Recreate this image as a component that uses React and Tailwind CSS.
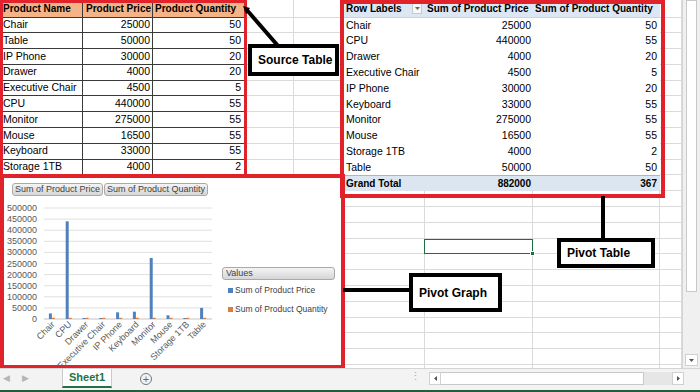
import React from "react";

const srcRows = [
  ["Chair", 25000, 50],
  ["Table", 50000, 50],
  ["IP Phone", 30000, 20],
  ["Drawer", 4000, 20],
  ["Executive Chair", 4500, 5],
  ["CPU", 440000, 55],
  ["Monitor", 275000, 55],
  ["Mouse", 16500, 55],
  ["Keyboard", 33000, 55],
  ["Storage 1TB", 4000, 2],
];

const pivotRows = [
  ["Chair", 25000, 50],
  ["CPU", 440000, 55],
  ["Drawer", 4000, 20],
  ["Executive Chair", 4500, 5],
  ["IP Phone", 30000, 20],
  ["Keyboard", 33000, 55],
  ["Monitor", 275000, 55],
  ["Mouse", 16500, 55],
  ["Storage 1TB", 4000, 2],
  ["Table", 50000, 50],
];

function SourceTable() {
  const cell = "border-r border-b border-[#3a3a3a] flex items-center whitespace-nowrap overflow-hidden";
  return (
    <div className="col-start-1 col-end-4 row-start-1 row-end-12 grid grid-cols-[83px_70px_92px] grid-rows-[17.5px_repeat(10,15.8px)] bg-white text-[10.5px] text-black">
      <div className={`${cell} bg-[#f5b487] pl-[3px] font-bold text-[10px]`}>Product Name</div>
      <div className={`${cell} bg-[#f5b487] pl-[3px] font-bold text-[10px]`}>Product Price</div>
      <div className={`${cell} bg-[#f5b487] pl-[2px] font-bold text-[10px]`}>Product Quantity</div>
      {srcRows.map((r) => (
        <React.Fragment key={r[0]}>
          <div className={`${cell} pl-[3px]`}>{r[0]}</div>
          <div className={`${cell} justify-end pr-[2px]`}>{r[1]}</div>
          <div className={`${cell} justify-end pr-[3px]`}>{r[2]}</div>
        </React.Fragment>
      ))}
    </div>
  );
}

function PivotTable() {
  const cell = "flex items-center whitespace-nowrap overflow-hidden";
  return (
    <div className="col-start-6 col-end-9 row-start-1 row-end-13 grid grid-cols-[82px_108px_127px] grid-rows-[17.5px_repeat(11,15.8px)] bg-white text-[10.5px] text-black">
      <div className={`${cell} bg-[#dde7f3] border-b border-[#c3d4ea] pl-[3px] font-bold text-[10px] justify-between pr-[3px]`}>
        <span>Row Labels</span>
        <span className="w-[10px] h-[11px] border border-[#c9c9c9] bg-[#f7f7f7] flex items-center justify-center">
          <svg width="5" height="3" viewBox="0 0 5 3"><path d="M0 0H5L2.5 3Z" fill="#666" /></svg>
        </span>
      </div>
      <div className={`${cell} bg-[#dde7f3] border-b border-[#c3d4ea] pl-[2px] font-bold text-[10px]`}>Sum of Product Price</div>
      <div className={`${cell} bg-[#dde7f3] border-b border-[#c3d4ea] pl-[2px] font-bold text-[10px]`}>Sum of Product Quantity</div>
      {pivotRows.map((r) => (
        <React.Fragment key={r[0]}>
          <div className={`${cell} pl-[3px]`}>{r[0]}</div>
          <div className={`${cell} justify-end pr-[2px]`}>{r[1]}</div>
          <div className={`${cell} justify-end pr-[3px]`}>{r[2]}</div>
        </React.Fragment>
      ))}
      <div className={`${cell} bg-[#dce6f1] border-t border-[#9db8dc] pl-[3px] font-bold text-[10px]`}>Grand Total</div>
      <div className={`${cell} bg-[#dce6f1] border-t border-[#9db8dc] justify-end pr-[2px] font-bold text-[10px]`}>882000</div>
      <div className={`${cell} bg-[#dce6f1] border-t border-[#9db8dc] justify-end pr-[3px] font-bold text-[10px]`}>367</div>
    </div>
  );
}

function FieldButton({ children }) {
  return (
    <div className="h-[13px] px-[2px] flex items-center rounded-[3px] border border-[#a9a9a9] bg-gradient-to-b from-[#f4f4f4] to-[#d6d6d6] text-[9px] text-[#3f3f3f] whitespace-nowrap leading-none">
      {children}
    </div>
  );
}

function Chart() {
  const cats = ["Chair", "CPU", "Drawer", "Executive Chair", "IP Phone", "Keyboard", "Monitor", "Mouse", "Storage 1TB", "Table"];
  const price = [25000, 440000, 4000, 4500, 30000, 33000, 275000, 16500, 4000, 50000];
  const y0 = 121;
  const k = 111 / 500000;
  const ticks = [0, 50000, 100000, 150000, 200000, 250000, 300000, 350000, 400000, 450000, 500000];
  const x0 = 40;
  const cw = 16.8;
  return (
    <div className="col-start-1 col-end-6 row-start-12 row-end-24 -mt-[1.5px] -mr-[2px] -mb-[4px] border-4 border-[#e2222a] bg-white flex z-10 overflow-hidden">
      <div className="flex flex-col w-[216px] shrink-0">
        <div className="flex pt-[5px] pl-[8px] gap-[1px] h-[20px]">
          <FieldButton>Sum of Product Price</FieldButton>
          <FieldButton>Sum of Product Quantity</FieldButton>
        </div>
        <svg width="216" height="167" className="block">
          {ticks.map((t) => (
            <g key={t}>
              <line x1={x0} x2={x0 + cw * 10} y1={y0 - t * k} y2={y0 - t * k} stroke={t === 0 ? "#c4c4c4" : "#e0e0e0"} strokeWidth="1" />
              <text x="33" y={y0 - t * k + 3} textAnchor="end" fontSize="9" fill="#595959" fontFamily="Liberation Sans, Arial, sans-serif">{t}</text>
            </g>
          ))}
          {cats.map((c, i) => {
            const cx = x0 + cw * (i + 0.5);
            const h = Math.max(price[i] * k, 1);
            return (
              <g key={c}>
                <rect x={cx - 3.5} y={y0 - h} width="3" height={h} fill="#4f81bd" />
                <rect x={cx - 0.5} y={y0 - 1.2} width="3" height="1.2" fill="#e07b39" />
                <text x={cx + 3} y={y0 + 6} textAnchor="end" fontSize="9" fill="#595959" fontFamily="Liberation Sans, Arial, sans-serif" transform={`rotate(-45 ${cx + 3} ${y0 + 6})`}>{c}</text>
              </g>
            );
          })}
        </svg>
      </div>
      <div className="pt-[89px] pl-[2px] flex flex-col">
        <div className="w-[113px] h-[13px] pl-[3px] flex items-center rounded-[3px] border border-[#a9a9a9] bg-gradient-to-b from-[#f4f4f4] to-[#d6d6d6] text-[9px] text-[#3f3f3f] leading-none">Values</div>
        <div className="flex items-center gap-[2px] pl-[6px] mt-[6px] text-[8.5px] text-[#404040] leading-none">
          <span className="w-[5px] h-[5px] bg-[#4f81bd]" />
          <span>Sum of Product Price</span>
        </div>
        <div className="flex items-center gap-[2px] pl-[6px] mt-[11px] text-[8.5px] text-[#404040] leading-none">
          <span className="w-[5px] h-[5px] bg-[#e07b39]" />
          <span>Sum of Product Quantity</span>
        </div>
      </div>
    </div>
  );
}

function Callout({ className, children }) {
  return (
    <div className={`absolute z-30 border-4 border-black bg-white flex items-center font-bold text-[12px] text-black whitespace-nowrap ${className}`}>
      {children}
    </div>
  );
}

export default function App() {
  const bgCells = [];
  for (let r = 0; r < 24; r++) {
    for (let c = 0; c < 9; c++) {
      bgCells.push(<div key={`${r}-${c}`} className="border-r border-b border-[#dadada]" />);
    }
  }
  const gridTpl = "grid grid-cols-[83px_70px_92px_49px_49px_82px_108px_127px_22px] grid-rows-[17.5px_repeat(23,15.8px)]";
  return (
    <div className="w-[700px] h-[392px] overflow-hidden bg-white flex flex-col font-['Liberation_Sans',Arial,sans-serif]">
      <div className="flex h-[368px]">
        <div className="relative grid w-[682px] h-[368px] overflow-hidden">
          <div className={`col-start-1 row-start-1 ${gridTpl}`}>{bgCells}</div>
          <div className={`col-start-1 row-start-1 ${gridTpl}`}>
            <SourceTable />
            <PivotTable />
            <Chart />
            <div className="col-start-1 col-end-4 row-start-1 row-end-12 border-[3px] border-[#e2222a] -mr-[2px] -mb-[2.5px] z-20 pointer-events-none" />
            <div className="col-start-6 col-end-9 row-start-1 row-end-13 border-4 border-[#e2222a] -ml-[3px] -mr-[5px] -mb-[6.7px] z-20 pointer-events-none" />
            <div className="col-start-7 row-start-16 -ml-[1px] border-[1.5px] border-[#1f6e43] relative">
              <span className="absolute -right-[3px] -bottom-[3px] w-[5px] h-[5px] bg-[#1f6e43] border border-white" />
            </div>
          </div>
          <svg className="absolute left-0 top-0 z-30 pointer-events-none" width="682" height="368">
            <line x1="246" y1="9" x2="279" y2="47" stroke="#000" strokeWidth="4" />
            <path d="M243 6 L250 8 L246 14 Z" fill="#000" />
            <line x1="603" y1="196" x2="603" y2="240" stroke="#000" strokeWidth="4" />
            <line x1="343" y1="290" x2="411" y2="290" stroke="#000" strokeWidth="4" />
          </svg>
          <Callout className="left-[248px] top-[44px] w-[91px] h-[32px] pl-[6px]">Source Table</Callout>
          <Callout className="left-[557px] top-[238px] w-[98px] h-[30px] pl-[6px]">Pivot Table</Callout>
          <Callout className="left-[409px] top-[273px] w-[93px] h-[39px] pl-[6px]">Pivot Graph</Callout>
        </div>
        <div className="w-[18px] h-[368px] bg-[#f0f0f0] border-l border-[#d4d4d4] flex flex-col">
          <div className="mx-[3px] h-[292px] bg-white border border-[#c9c9c9]" />
          <div className="flex-1" />
          <div className="mx-[2px] mb-[2px] h-[12px] bg-white border border-[#d0d0d0] flex items-center justify-center">
            <svg width="5" height="3" viewBox="0 0 5 3"><path d="M0 0H5L2.5 3Z" fill="#555" /></svg>
          </div>
        </div>
      </div>
      <div className="h-[24px] bg-[#f3f3f3] border-t border-[#d4d4d4] border-b-2 border-b-[#1f5f3c] flex items-start text-[11px]">
        <div className="w-[62px] h-[20px] flex items-center gap-[12px] pl-[3px] text-[#b5b5b5] text-[9px]">
          <span>◀</span>
          <span>▶</span>
        </div>
        <div className="w-[50px] h-[19px] bg-white border-x border-[#c9c9c9] border-b-2 border-b-[#217346] flex items-center justify-center font-bold text-[#217346] text-[11px]">Sheet1</div>
        <div className="ml-[28px] mt-[4px] w-[12px] h-[12px] rounded-full border border-[#777] flex items-center justify-center text-[#666] text-[11px] leading-none">+</div>
        <div className="ml-[258px] mt-[2px] text-[#aaa] text-[11px] leading-none">⋮</div>
        <div className="ml-[8px] mt-[3px] flex items-center h-[13px]">
          <div className="w-[12px] h-[13px] bg-white border border-[#d0d0d0] flex items-center justify-center">
            <svg width="3" height="5" viewBox="0 0 3 5"><path d="M3 0V5L0 2.5Z" fill="#555" /></svg>
          </div>
          <div className="w-[203px] h-[13px] bg-white border-y border-r border-[#c9c9c9]" />
          <div className="w-[28px] h-[13px] bg-[#e6e6e6]" />
          <div className="w-[12px] h-[13px] bg-white border border-[#d0d0d0] flex items-center justify-center">
            <svg width="3" height="5" viewBox="0 0 3 5"><path d="M0 0V5L3 2.5Z" fill="#555" /></svg>
          </div>
        </div>
      </div>
    </div>
  );
}
